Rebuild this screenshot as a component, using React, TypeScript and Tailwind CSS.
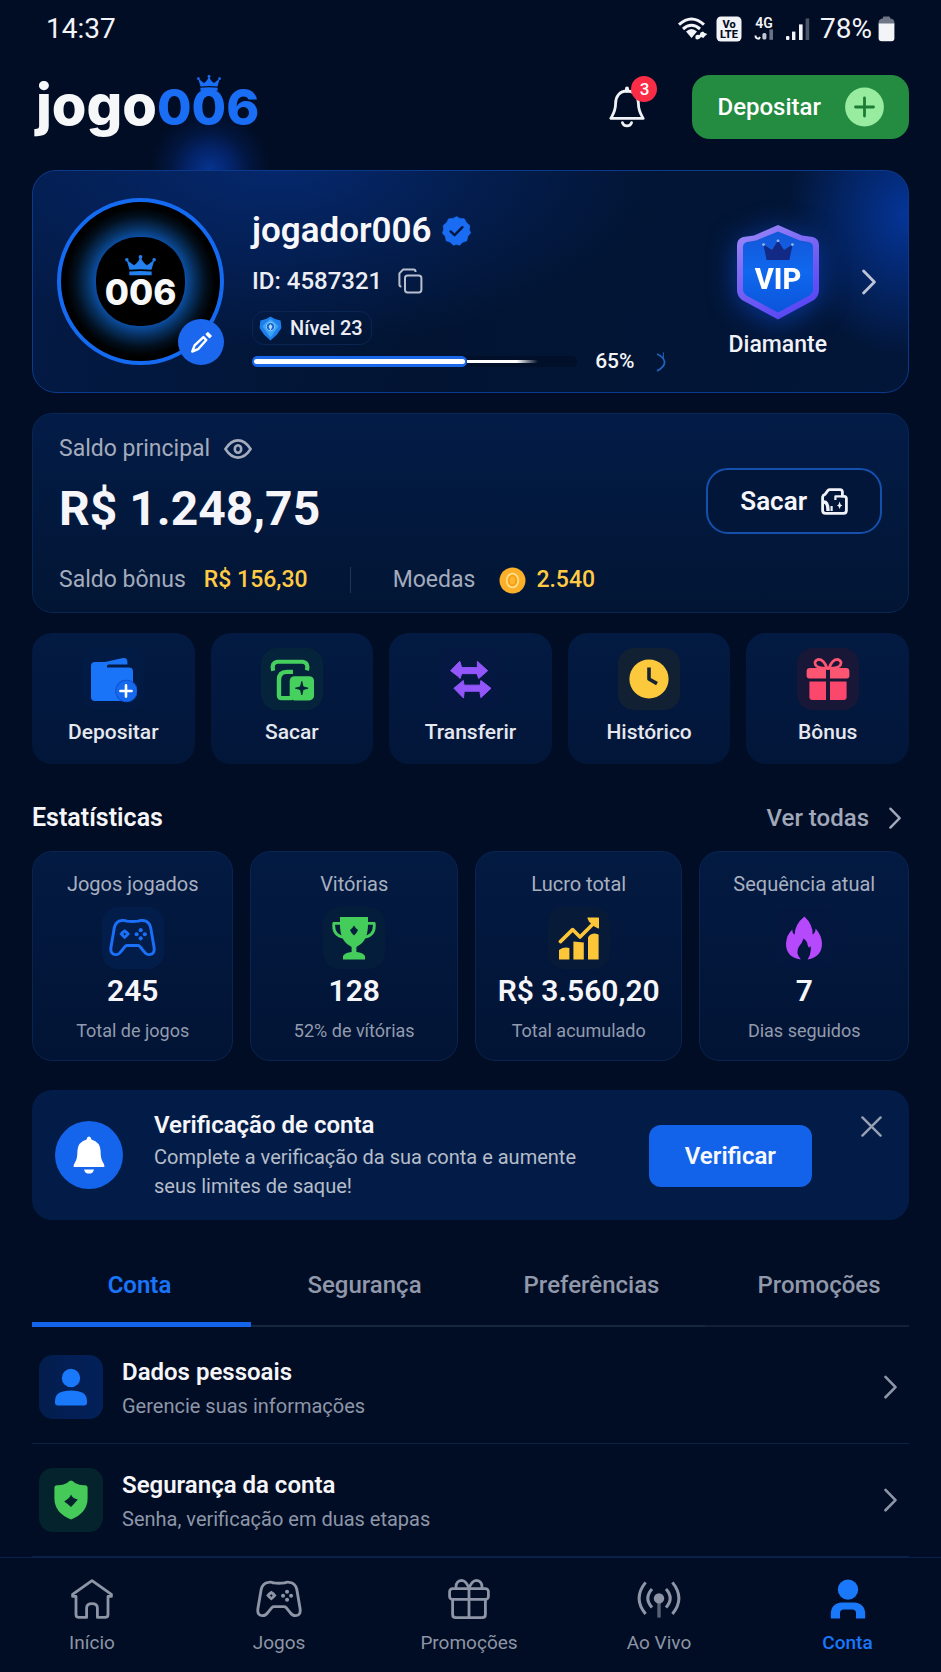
import React from "react";

const Crown = ({ className }: { className?: string }) => (
  <svg viewBox="0 0 30 20" className={className} fill="currentColor" aria-hidden="true">
    <circle cx="1.8" cy="4.6" r="1.7" />
    <circle cx="28.2" cy="4.6" r="1.7" />
    <circle cx="15" cy="1.9" r="1.8" />
    <path d="M1.5 4.5 L8.6 10 Q12.6 8 15 1.5 Q17.4 8 21.4 10 L28.5 4.5 L25.6 14.4 Q15 13 4.4 14.4 Z" />
    <path d="M4.2 16 Q15 14.8 25.8 16 V19.6 H4.2 Z" />
  </svg>
);

const Chevron = ({ className }: { className?: string }) => (
  <svg viewBox="0 0 14 26" className={className} fill="none" stroke="currentColor" strokeWidth="2.8" strokeLinecap="round" strokeLinejoin="round" aria-hidden="true">
    <path d="M1.6 2 L12.4 13 L1.6 24" />
  </svg>
);

const Gamepad = ({ className }: { className?: string }) => (
  <svg viewBox="0 0 48 40" className={className} fill="none" stroke="currentColor" strokeWidth="3" strokeLinejoin="round" aria-hidden="true">
    <path d="M13 2.6 Q16 2 18 3.2 Q24 3.9 30 3.2 Q32 2 35 2.6 Q41 3.2 42.6 10 L46 30 Q47 37 41.5 37.4 Q38 37.6 35.5 34 L31.5 29 Q30.6 28 29 28 H19 Q17.4 28 16.5 29 L12.5 34 Q10 37.6 6.5 37.4 Q1 37 2 30 L5.4 10 Q7 3.2 13 2.6 Z" />
    <g fill="currentColor" stroke="none">
      <path d="M16 11.4 L19 13.6 L21.4 16.4 L19 19 L16 21.6 L13 19 L10.6 16.4 L13 13.6 Z M16 15 L14.6 16.4 L16 17.8 L17.4 16.4 Z" fillRule="evenodd" />
      <circle cx="32.4" cy="12.4" r="2.1" />
      <circle cx="28.2" cy="16.6" r="2.1" />
      <circle cx="36.6" cy="16.6" r="2.1" />
      <circle cx="32.4" cy="20.8" r="2.1" />
    </g>
  </svg>
);

const StatusBar = () => (
  <div className="flex h-14 items-center justify-between px-[46px] pt-[2px] text-[28px] leading-8 text-[#f3f4f8]">
    <span>14:37</span>
    <div className="flex items-center">
      <svg width="30" height="24" viewBox="0 0 30 24" aria-hidden="true">
        <g fill="none" stroke="#f3f4f8" strokeWidth="3">
          <path d="M1 7.6 Q13.5 -3.6 26 7.6" />
          <path d="M5 12 Q13.5 4.6 22 12" />
        </g>
        <path d="M8 14.6 Q13.5 9.6 19 14.6 L13.5 21 Z" fill="#f3f4f8" />
        <path d="M17.4 19 Q19 17 21.6 18 L22.6 15.6 L25 14.4 L26.6 16 L29.4 17 L27 19 L25.4 21 L23 20 Q21 23.4 17.6 22 Z" fill="#f3f4f8" />
      </svg>
      <svg className="ml-2" width="26" height="26" viewBox="0 0 26 26" aria-label="VoLTE">
        <rect x="0.5" y="0.5" width="25" height="25" rx="4.5" fill="#f3f4f8" />
        <text x="13" y="12.4" textAnchor="middle" fontSize="11" fontWeight="800" fontFamily="Roboto, sans-serif" fill="#010d24">Vo</text>
        <text x="13" y="22.4" textAnchor="middle" fontSize="11" fontWeight="800" fontFamily="Roboto, sans-serif" fill="#010d24">LTE</text>
      </svg>
      <svg className="ml-[10px]" width="24" height="32" viewBox="0 0 24 32" aria-label="4G">
        <text x="12" y="14.6" textAnchor="middle" fontSize="14" fontWeight="600" fontFamily="Roboto, sans-serif" fill="#f3f4f8">4G</text>
        <path d="M3.5 22.6 Q3.5 26 7 25.6 L8 24" fill="none" stroke="#f3f4f8" strokeWidth="2" />
        <rect x="10.4" y="20" width="4" height="6.6" rx="1.6" fill="#c3c8d4" />
        <rect x="17.4" y="16.4" width="3.6" height="10.4" fill="#6a7286" />
      </svg>
      <svg className="ml-[10px]" width="24" height="24" viewBox="0 0 24 24" aria-hidden="true">
        <rect x="0" y="19" width="3.4" height="4" rx="1" fill="#f3f4f8" />
        <rect x="6" y="14.6" width="3.4" height="8.4" fill="#f3f4f8" />
        <rect x="13" y="7.4" width="3.6" height="15.6" fill="#f3f4f8" />
        <rect x="19.6" y="1.4" width="3.6" height="21.6" fill="#4b5468" />
      </svg>
      <span className="ml-[10px]">78%</span>
      <svg className="ml-[6px]" width="17" height="26" viewBox="0 0 17 26" aria-hidden="true">
        <path d="M5.4 0.6 h6 l1 2 q4 0.4 4 4 v2 H0.6 v-2 q0 -3.6 4 -4 Z" fill="#6f7688" />
        <path d="M0.6 7.6 h15.8 v14.6 q0 3 -3 3 H3.6 q-3 0 -3 -3 Z" fill="#f3f4f8" />
      </svg>
    </div>
  </div>
);

const Header = () => (
  <header className="relative mt-[19px] flex h-16 items-center justify-between">
    <div className="pointer-events-none absolute left-[118px] top-9 h-[59px] w-[120px] bg-[radial-gradient(ellipse_50%_100%_at_50%_100%,#06348f_0%,#04246b_35%,#021640_65%,transparent_100%)]"></div>
    <a href="#" className="relative ml-1 flex items-baseline pb-1 font-[Inter,sans-serif] font-extrabold leading-none" aria-label="jogo006">
      <span className="text-[56px] text-[#f6f7f9]">jogo</span>
      <span className="flex text-[50px] text-[#1a6df5]">
        <span>0</span>
        <span className="relative">
          0
          <Crown className="absolute left-1/2 top-[-7px] w-6 -translate-x-1/2" />
        </span>
        <span>6</span>
      </span>
    </a>

    <div className="flex items-center">
      <button className="relative" aria-label="Notificações, 3 novas">
        <svg width="36" height="42" viewBox="0 0 36 42" fill="none" stroke="#f1f2f7" strokeWidth="2.8" strokeLinejoin="round" strokeLinecap="round" aria-hidden="true">
          <path d="M18 2.4 V4.6" strokeWidth="4" />
          <path d="M18 5 C10.6 5 6.6 10.4 6.6 17.4 C6.6 24.6 4.6 27.4 1.8 32.4 H34.2 C31.4 27.4 29.4 24.6 29.4 17.4 C29.4 10.4 25.4 5 18 5 Z" />
          <path d="M13.4 36.6 Q14.4 39.8 18 39.8 Q21.6 39.8 22.6 36.6" />
        </svg>
        <span className="absolute -right-3 -top-[10px] flex size-[26px] items-center justify-center rounded-full bg-[#fb2c46] text-[17px] font-medium leading-none text-white">3</span>
      </button>

      <button className="ml-[47px] flex h-16 items-center gap-6 rounded-[18px] bg-[#248c41] pl-[25px] pr-[25px] text-2xl font-medium text-white">
        Depositar
        <svg width="39" height="40" viewBox="0 0 39 40" aria-hidden="true">
          <circle cx="19.5" cy="20" r="19.4" fill="#98eca0" />
          <path d="M19.5 11 V29 M10.5 20 H28.5" stroke="#1b7c36" strokeWidth="2.8" strokeLinecap="round" />
        </svg>
      </button>
    </div>
  </header>
);

const Profile = () => (
  <section className="mt-[31px] flex h-[223px] items-center rounded-3xl border border-[#0b3a8c] bg-[radial-gradient(ellipse_120px_140px_at_100%_20%,#053598_0%,transparent_100%),radial-gradient(ellipse_380px_190px_at_28%_-5%,#05286e_0%,transparent_100%),linear-gradient(100deg,#031a45_0%,#021432_45%,#021639_100%)] pl-6 pr-8">
    <div className="relative size-[167px] shrink-0 rounded-full border-4 border-[#156af2] bg-black bg-[radial-gradient(circle_closest-side,#0c4fa4_0%,#0c4fa4_56%,#07305f_68%,#02101f_82%,#000_94%)]">
      <div className="flex size-full flex-col items-center justify-center">
        <div className="flex size-[89px] flex-col items-center justify-center rounded-[42px] bg-black">
          <Crown className="w-[31px] text-[#2480ee]" />
          <span className="font-[Inter,sans-serif] text-[35px] font-extrabold leading-8 text-[#f8f8f8]">006</span>
        </div>
      </div>
      <button className="absolute -bottom-1 -right-1 flex size-[46px] items-center justify-center rounded-full bg-[#1b68ee]" aria-label="Editar foto">
        <svg width="23" height="23" viewBox="0 0 24 24" fill="none" stroke="#fff" strokeWidth="2.6" strokeLinejoin="round" aria-hidden="true">
          <path d="M2.4 21.4 L4.8 15 L14 6.4 L17 9.4 L8.4 19 Z" />
          <path d="M17 3.4 L18.6 2 L22 5.2 L20.4 6.8 Z" fill="#fff" strokeWidth="1.6" />
        </svg>
      </button>
    </div>

    <div className="ml-7 flex-1 pt-5">
      <div className="flex items-center gap-[10px]">
        <h1 className="text-[35px] font-semibold leading-10 text-[#f8f8fb]">jogador006</h1>
        <svg width="29" height="30" viewBox="0 0 29 30" aria-label="Verificado">
          <path d="M14.5 0.6 L18 2.4 L22.4 2.8 L24.4 6.6 L27.8 9.6 L27.4 13.4 L28.6 17 L25.8 20.4 L24.8 24.8 L20.8 26.2 L17.6 29.2 L14.5 28.4 L11.4 29.2 L8.2 26.2 L4.2 24.8 L3.2 20.4 L0.4 17 L1.6 13.4 L1.2 9.6 L4.6 6.6 L6.6 2.8 L11 2.4 Z" fill="#1a6df3" stroke="#1a6df3" strokeWidth="0.6" strokeLinejoin="round" />
          <path d="M8.6 15.4 L12.6 19.2 L20.4 11.2" fill="none" stroke="#031540" strokeWidth="2.4" strokeLinecap="round" strokeLinejoin="round" />
        </svg>
      </div>

      <div className="mt-4 flex items-center gap-4 text-2xl font-medium leading-7 text-[#eceef4]">
        ID: 4587321
        <button aria-label="Copiar ID">
          <svg className="block" width="25" height="26" viewBox="0 0 25 26" fill="none" stroke="#b9bfce" strokeWidth="2" strokeLinejoin="round" aria-hidden="true">
            <rect x="7" y="7.4" width="16.4" height="17" rx="2.6" />
            <path d="M3.4 18.4 H3 Q1.4 18.4 1.4 16.4 V5.4 L5 1.6 H15.4 Q17.6 1.6 17.6 4" />
          </svg>
        </button>
      </div>

      <div className="mt-4 inline-flex h-[34px] items-center gap-2 rounded-xl border border-[#0a2552] pl-[6px] pr-2 text-xl font-medium text-[#eceef4]">
        <svg width="23" height="25" viewBox="0 0 23 25" aria-hidden="true">
          <path d="M11.5 0.6 L16 3 L21.6 4.4 L22.4 12 L18 18.4 L11.5 24.4 L5 18.4 L0.6 12 L1.4 4.4 L7 3 Z" fill="#1d7fec" />
          <path d="M11.5 3 L17 7.6 L19.4 10.4 L11.5 21.6 L3.6 10.4 L6 7.6 Z" fill="#3ba4f8" />
          <circle cx="11.5" cy="10.6" r="4.2" fill="#1565cf" stroke="#8ecbff" strokeWidth="1" />
          <path d="M11.5 8 L13.4 10.6 L11.5 14.4 L9.6 10.6 Z" fill="#b6dcff" />
        </svg>
        Nível 23
      </div>

      <div className="mt-1 flex h-5 items-center text-[21px] font-medium text-[#f3f4f8]">
        <div className="flex h-[11px] flex-1 items-center rounded-full bg-[#010f28]" role="progressbar" aria-valuenow={65} aria-valuemin={0} aria-valuemax={100} aria-label="Progresso do nível">
          <div className="flex h-full items-center rounded-full bg-[#1a67ea] px-[2px]" style={{ width: "66%" }}>
            <div className="h-[5px] w-full rounded-full bg-white"></div>
          </div>
          <div className="h-[3px] w-[22%] bg-linear-to-r from-white from-70% to-transparent"></div>
        </div>
        <span className="ml-[18px]">65%</span>
        <svg className="ml-5" width="12" height="20" viewBox="0 0 12 20" fill="none" stroke="#1f63bd" strokeWidth="1.8" aria-hidden="true">
          <path d="M2 2 Q9 5 9.6 10 Q9.6 15 2 19" />
          <path d="M8.4 0.4 V6" strokeWidth="1" />
        </svg>
      </div>
    </div>

    <button className="ml-[62px] flex items-center gap-[35px] text-[23px] font-medium text-[#f3f4f8]">
      <span className="flex flex-col items-center pt-5">
        <svg width="84" height="96" viewBox="0 0 84 96" className="drop-shadow-[0_4px_14px_#08389c]" aria-hidden="true">
          <defs>
            <linearGradient id="vipEdge" x1="0" y1="0" x2="0.5" y2="1">
              <stop offset="0" stopColor="#a08cf8" />
              <stop offset="0.5" stopColor="#7a66f4" />
              <stop offset="1" stopColor="#5a48f4" />
            </linearGradient>
            <linearGradient id="vipFill" x1="0" y1="0" x2="0" y2="1">
              <stop offset="0" stopColor="#1456d8" />
              <stop offset="0.5" stopColor="#0f68ee" />
              <stop offset="1" stopColor="#0b54da" />
            </linearGradient>
          </defs>
          <path d="M42 1 L66 11.4 L77 13 Q83 15 83 21 V66 Q83 72 78 76 L42 95.4 L6 76 Q1 72 1 66 V21 Q1 15 7 13 L18 11.4 Z" fill="url(#vipEdge)" />
          <path d="M42 7.4 L64 16.4 L73 18 Q77 19 77 23 V65 Q77 69 73.6 71.4 L42 88.6 L10.4 71.4 Q7 69 7 65 V23 Q7 19 11 18 L20 16.4 Z" fill="url(#vipFill)" />
          <path d="M27.4 20.6 L36 26 L42 16.4 L48 26 L56.6 20.6 L53.4 36 H30.6 Z" fill="#122a86" />
          <circle cx="27.6" cy="20.6" r="1.4" fill="#9fb4e8" />
          <circle cx="42" cy="16.8" r="1.4" fill="#9fb4e8" />
          <circle cx="56.4" cy="20.6" r="1.4" fill="#9fb4e8" />
          <text x="42" y="65" textAnchor="middle" fontSize="29" fontWeight="800" fontFamily="Roboto, sans-serif" fill="#fff">VIP</text>
        </svg>
        <span className="mt-[11px] leading-7">Diamante</span>
      </span>
      <Chevron className="w-[14px] text-[#bcc4d6]" />
    </button>
  </section>
);

const Balance = () => (
  <section className="mt-5 rounded-[20px] border border-[#082653] bg-linear-to-b from-[#031c47] to-[#021534] px-[26px] pb-[18px] pt-[21px]">
    <div className="flex items-end justify-between">
      <div>
        <div className="flex items-center gap-[14px] text-[23px] leading-7 text-[#a3abbd]">
          Saldo principal
          <button aria-label="Ocultar saldo">
            <svg className="block" width="28" height="20" viewBox="0 0 28 20" fill="none" stroke="#a3abbd" strokeWidth="2.6" aria-hidden="true">
              <path d="M1.4 10 Q7 1.4 14 1.4 Q21 1.4 26.6 10 Q21 18.6 14 18.6 Q7 18.6 1.4 10 Z" strokeLinejoin="round" />
              <ellipse cx="14" cy="10" rx="3.2" ry="3.8" />
            </svg>
          </button>
        </div>
        <div className="mt-[18px] text-5xl font-bold leading-[56px] text-[#f6f6fa]">R$ 1.248,75</div>
      </div>

      <button className="mb-[3px] flex h-[66px] items-center gap-[14px] rounded-[22px] border-2 border-[#1450ac] bg-[#02163a] px-8 text-[26px] font-semibold text-[#f6f6fa]">
        Sacar
        <svg width="27" height="27" viewBox="0 0 27 27" fill="none" stroke="#f1f2f7" strokeWidth="2.8" strokeLinejoin="round" aria-hidden="true">
          <path d="M1.6 9 Q2 7 4 6.4 L7 2.4 Q7.6 1.6 9 1.6 H19 Q21.4 1.6 21.4 4 V8.4 H23 Q25.4 8.4 25.4 10.8 V22.6 Q25.4 25.4 22.6 25.4 H4.6 Q1.6 25.4 1.6 22.6 Z" />
          <path d="M21 8.4 H14.4 V12" strokeWidth="2.2" />
          <path d="M3 14 Q7 14 7 23" strokeWidth="3.4" />
          <path d="M10.6 18 V23" strokeWidth="2.2" />
          <path d="M18.6 13.6 L19.6 16.4 L21.4 17.4 L19.6 18.4 L18.6 21 L17.6 18.4 L16 17.4 L17.6 16.4 Z" fill="#f1f2f7" stroke="none" />
        </svg>
      </button>
    </div>

    <div className="mt-[29px] flex items-center text-[23px] leading-7 text-[#a3abbd]">
      <span>Saldo bônus</span>
      <span className="ml-[18px] font-medium text-[#ffcb45]">R$ 156,30</span>
      <span className="ml-[42px] h-[26px] w-px bg-[#21345a]"></span>
      <span className="ml-[42px]">Moedas</span>
      <svg className="ml-6" width="27" height="27" viewBox="0 0 27 27" aria-hidden="true">
        <circle cx="13.5" cy="13.5" r="13" fill="#fcb02a" />
        <ellipse cx="13.5" cy="13.5" rx="5.8" ry="6.8" fill="#f9a01b" stroke="#ffe08a" strokeWidth="1.8" />
        <ellipse cx="13.5" cy="13.5" rx="2.6" ry="4" fill="#fdb62c" />
      </svg>
      <span className="ml-[10px] font-medium text-[#ffcb45]">2.540</span>
    </div>
  </section>
);

const quickActions = [
  {
    label: "Depositar",
    tile: "bg-[#031d4a]/40",
    icon: (
      <svg width="48" height="48" viewBox="0 0 48 48" aria-hidden="true">
        <path d="M6 7 H16 L34 3 Q38.4 2.4 38.4 7 V9.4 L20 9.6 Q17.6 9.8 18 12.4 L40 12.6 Q44 12.8 44 16.6 V42 Q44 46 40 46 H6 Q2 46 2 42 V11 Q2 7 6 7 Z" fill="#1a74f8" />
        <circle cx="37.4" cy="36" r="11.2" fill="#0d52cc" />
        <circle cx="37.4" cy="36" r="10.4" fill="#1668ee" />
        <path d="M37 30.4 V41.6 M31.4 36 H42.6" stroke="#fff" strokeWidth="2.6" strokeLinecap="round" />
      </svg>
    ),
  },
  {
    label: "Sacar",
    tile: "bg-[#05233a]",
    icon: (
      <svg width="46" height="46" viewBox="0 0 48 48" aria-hidden="true">
        <g fill="none" stroke="#46d05d">
          <path d="M4.4 15.4 Q2 7 9 6 H35 Q41.6 7 39.6 15" strokeWidth="4.4" strokeLinejoin="round" />
          <path d="M24 44 H13 Q10.4 44 10.4 41 V25 Q10.4 16.6 18.6 16.6 H25" strokeWidth="4.6" strokeLinejoin="round" />
        </g>
        <rect x="21.6" y="21" width="25.4" height="25.4" rx="5" fill="#46d05d" />
        <path d="M34.2 26.6 L35.6 32.2 L40.8 33.6 L35.6 35 L34.2 40.6 L32.8 35 L27.6 33.6 L32.8 32.2 Z" fill="#06253a" stroke="#06253a" strokeWidth="1" />
      </svg>
    ),
  },
  {
    label: "Transferir",
    tile: "bg-[#071742]/60",
    icon: (
      <svg width="43" height="43" viewBox="0 0 44 44" fill="#9256fb" stroke="#9256fb" strokeWidth="1" strokeLinejoin="round" aria-hidden="true">
        <path d="M1.6 13 L11 3.4 L13 9.8 H29 L29 3.4 L39.6 13 L30.4 21 L28.6 16 H13 L11.4 21 L9 18.6 Z" />
        <path d="M5 31 L14.6 23 L15.4 27.8 H32 L32.6 23 L43 31 L32.6 40.6 L31.6 34 H15.6 L14.8 41 Z" />
      </svg>
    ),
  },
  {
    label: "Histórico",
    tile: "bg-[#122033]",
    icon: (
      <svg width="42" height="42" viewBox="0 0 42 42" aria-hidden="true">
        <circle cx="21" cy="21" r="19.6" fill="#fcc93d" />
        <path d="M21 9.6 V21 L29 25.6" fill="none" stroke="#152233" strokeWidth="3.6" strokeLinejoin="round" />
      </svg>
    ),
  },
  {
    label: "Bônus",
    tile: "bg-[#181737]",
    icon: (
      <svg width="44" height="44" viewBox="0 0 44 44" aria-hidden="true">
        <g fill="none" stroke="#fc5572" strokeWidth="2.8">
          <path d="M21 11.4 Q18 2.4 12.4 2.4 Q7.4 4 9.6 8 Q11 11 21 11.4 Z" />
          <path d="M23 11.4 Q26 2.4 31.6 2.4 Q36.6 4 34.4 8 Q33 11 23 11.4 Z" />
        </g>
        <path d="M4 11 H20 V21.4 H3 Q0.6 21.4 0.6 19 V14.4 Q0.6 11 4 11 Z M24 11 H40 Q43.4 11 43.4 14.4 V19 Q43.4 21.4 41 21.4 H24 Z" fill="#fc5572" />
        <path d="M3.4 24.4 H20 V43 H6.4 Q3.4 43 3.4 40 Z M24 24.4 H40.6 V40 Q40.6 43 37.6 43 H24 Z" fill="#fb476b" />
      </svg>
    ),
  },
];

const QuickActions = () => (
  <section className="mt-5 grid grid-cols-5 gap-4">
    {quickActions.map((action) => (
      <button key={action.label} className="flex flex-col items-center rounded-[20px] bg-linear-to-b from-[#031a42] to-[#021639] pb-[18px] pt-[15px] text-[21px] font-medium leading-7 text-[#e6e8ef]">
        <span className={`flex size-[62px] items-center justify-center rounded-2xl ${action.tile}`}>{action.icon}</span>
        <span className="mt-2">{action.label}</span>
      </button>
    ))}
  </section>
);

const stats = [
  {
    label: "Jogos jogados",
    value: "245",
    note: "Total de jogos",
    tile: "bg-[#031d4a]",
    icon: <Gamepad className="w-[47px] text-[#1a70f8]" />,
  },
  {
    label: "Vitórias",
    value: "128",
    note: "52% de vítórias",
    tile: "bg-[#031d3b]",
    icon: (
      <svg width="44" height="44" viewBox="0 0 44 44" aria-hidden="true">
        <path d="M8 1 H36 V6 Q36.6 24 26.6 29.6 L24.4 31 V36 Q31 36.6 33 40 V43.4 H11 V40 Q13 36.6 19.6 36 V31 L17.4 29.6 Q7.4 24 8 6 Z" fill="#45cd5b" />
        <path d="M9 7.4 H1.8 Q0.6 20 12.6 21.4 M35 7.4 H42.2 Q43.4 20 31.4 21.4" fill="none" stroke="#45cd5b" strokeWidth="2.8" strokeLinejoin="round" />
        <path d="M22 9.4 Q23 11.4 26 14 Q25 17 22 19.4 Q19 17 18 14 Q21 11.4 22 9.4 Z" fill="#04223b" />
      </svg>
    ),
  },
  {
    label: "Lucro total",
    value: "R$ 3.560,20",
    note: "Total acumulado",
    tile: "bg-[#071a38]",
    icon: (
      <svg width="42" height="44" viewBox="0 0 42 44" aria-hidden="true">
        <path d="M2.4 25.6 L14.6 13.6 L22 21 L35 8" fill="none" stroke="#fcc638" strokeWidth="3.6" strokeLinecap="round" strokeLinejoin="round" />
        <path d="M30 2 H40.4 V12 L36.6 10 L31.6 5.4 Z" fill="#fcc638" stroke="#fcc638" strokeWidth="1.2" strokeLinejoin="round" />
        <path d="M1 34 Q6 30.4 11.4 32 V43.4 H1 Z M15.4 25.4 L25.8 26.4 V43.4 H15.4 Z M30 21.4 Q32 17.4 37 17.4 L40.6 18.4 V43.4 H30 Z" fill="#fcc638" />
      </svg>
    ),
  },
  {
    label: "Sequência atual",
    value: "7",
    note: "Dias seguidos",
    tile: "bg-[#05173f]/60",
    icon: (
      <svg width="38" height="44" viewBox="0 0 38 44" aria-hidden="true">
        <path d="M19.4 0.6 Q28 8.6 27.6 18.6 Q30.6 16.6 30.6 12.6 Q36.8 19.6 37 27.6 Q37 41 22.6 43.6 Q25.6 39 25.8 34 Q26 28.6 24.6 31 Q24 33 22.6 29 Q22.4 25.6 18.6 22.6 Q17 27.4 14 30.4 Q10 36 15.8 43.6 Q1 41.6 1 27.6 Q1.4 18.6 7.4 13.4 Q7 17 9.8 18.6 Q9.6 8.6 19.4 0.6 Z" fill="#b649fb" />
      </svg>
    ),
  },
];

const Stats = () => (
  <section>
    <div className="mt-[38px] flex items-center justify-between leading-8">
      <h2 className="text-[25px] font-semibold text-[#f6f6fa]">Estatísticas</h2>
      <a href="#" className="flex items-center gap-5 pr-2 text-2xl font-medium text-[#a0a8ba]">
        Ver todas
        <Chevron className="w-3" />
      </a>
    </div>

    <div className="mt-[17px] grid grid-cols-[201fr_207fr_207fr_209fr] gap-[17px]">
      {stats.map((stat) => (
        <div key={stat.label} className="flex flex-col items-center rounded-[20px] border border-[#08244f] bg-linear-to-b from-[#031a42] to-[#021435] pb-[17px] pt-[18px]">
          <span className="text-xl leading-7 text-[#a8b0c0]">{stat.label}</span>
          <span className={`mt-[9px] flex size-[62px] items-center justify-center rounded-2xl ${stat.tile}`}>{stat.icon}</span>
          <span className="mt-1 text-[30px] font-semibold leading-9 text-[#f6f6fa]">{stat.value}</span>
          <span className="mt-[10px] text-lg leading-6 text-[#929bad]">{stat.note}</span>
        </div>
      ))}
    </div>
  </section>
);

const VerifyBanner = () => (
  <section className="mt-[29px] flex h-[130px] items-center rounded-[20px] bg-[#031c47] pl-[23px] pr-[27px]">
    <div className="flex size-[68px] shrink-0 items-center justify-center rounded-full bg-[#1565ec]">
      <svg width="34" height="38" viewBox="0 0 34 38" fill="#fff" aria-hidden="true">
        <path d="M17 0.6 Q19 0.6 19.4 3.4 Q28.4 6 28.6 15 Q28.6 23 31 26.4 Q32.6 28 32.4 31 H1.6 Q1.4 28 3 26.4 Q5.4 23 5.4 15 Q5.6 6 14.6 3.4 Q15 0.6 17 0.6 Z" />
        <path d="M12 33.4 H22 Q21 37.6 17 37.6 Q13 37.6 12 33.4 Z" />
      </svg>
    </div>
    <div className="ml-[31px] flex-1">
      <h2 className="text-2xl font-semibold leading-8 text-[#f6f6fa]">Verificação de conta</h2>
      <p className="mt-[2px] max-w-[450px] text-xl leading-[29px] text-[#b6bdca]">
        Complete a verificação da sua conta e aumente seus limites de saque!
      </p>
    </div>
    <button className="mt-[2px] h-[62px] rounded-xl bg-[#1263ea] px-9 text-2xl font-semibold text-[#f6f8fd]">Verificar</button>
    <button className="ml-[49px] mt-[26px] self-start text-[#98a1b4]" aria-label="Fechar">
      <svg className="block" width="21" height="21" viewBox="0 0 21 21" fill="none" stroke="currentColor" strokeWidth="2.4" strokeLinecap="round" aria-hidden="true">
        <path d="M1.4 1.4 L19.6 19.6 M19.6 1.4 L1.4 19.6" />
      </svg>
    </button>
  </section>
);

const Tabs = () => (
  <div role="tablist" className="mt-10 grid grid-cols-[219fr_227fr_227fr_204fr] text-2xl font-medium leading-8 text-[#9098aa]">
    <button role="tab" aria-selected="true" className="h-[67px] border-b-[5px] border-[#1565ec] pb-[12px] pr-1 font-semibold text-[#1a74f8]">Conta</button>
    <button role="tab" aria-selected="false" className="h-[67px] border-b-2 border-[#17263f] pb-[15px]">Segurança</button>
    <button role="tab" aria-selected="false" className="h-[67px] border-b-2 border-[#17263f] pb-[15px]">Preferências</button>
    <button role="tab" aria-selected="false" className="h-[67px] border-b-2 border-[#122036] pb-[15px] pl-6">Promoções</button>
  </div>
);

const accountItems = [
  {
    title: "Dados pessoais",
    text: "Gerencie suas informações",
    tile: "bg-linear-to-r from-[#031d4d] to-[#03205a]",
    icon: (
      <svg width="34" height="38" viewBox="0 0 34 38" fill="#1a78fb" aria-hidden="true">
        <circle cx="17" cy="10" r="9.2" />
        <path d="M1 33 Q1 22.6 17 22.6 Q33 22.6 33 33 V35 Q33 37.4 30.6 37.4 H3.4 Q1 37.4 1 35 Z" />
      </svg>
    ),
  },
  {
    title: "Segurança da conta",
    text: "Senha, verificação em duas etapas",
    tile: "bg-[#05232d]",
    icon: (
      <svg width="34" height="40" viewBox="0 0 34 40" aria-hidden="true">
        <path d="M17 0.6 Q19 0.8 21 3 Q26 5.6 31 5.2 Q33.6 5.2 33.6 8 V18 Q33.6 33 17 39.4 Q0.4 33 0.4 18 V8 Q0.4 5.2 3 5.2 Q8 5.6 13 3 Q15 0.8 17 0.6 Z" fill="#45ca5a" />
        <path d="M17 14.6 Q18.4 18.6 23.8 19.4 Q20 24 17 27 Q14 24 10.2 21.4 Q15.6 18.6 17 14.6 Z" fill="#05232d" />
      </svg>
    ),
  },
];

const AccountList = () => (
  <ul className="pt-1">
    {accountItems.map((item) => (
      <li key={item.title} className="border-b border-[#0c2145]">
        <a href="#" className="flex h-28 items-center pl-[7px] pr-3">
          <span className={`flex size-16 shrink-0 items-center justify-center rounded-[14px] ${item.tile}`}>{item.icon}</span>
          <span className="ml-[19px] flex flex-1 flex-col pt-[2px]">
            <span className="text-2xl font-semibold leading-8 text-[#f6f6fa]">{item.title}</span>
            <span className="mt-1 text-xl leading-7 text-[#8d96a8]">{item.text}</span>
          </span>
          <Chevron className="w-[13px] text-[#8d96a8]" />
        </a>
      </li>
    ))}
  </ul>
);

const BottomNav = () => (
  <nav className="mt-auto grid grid-cols-[184fr_190fr_190fr_190fr_187fr] border-t border-[#08204a] bg-[#010d24] pb-[17px] pt-[21px] text-[19px] leading-6 text-[#8d95a6]">
    <a href="#" className="flex flex-col items-center gap-3">
      <svg width="42" height="40" viewBox="0 0 42 40" fill="none" stroke="currentColor" strokeWidth="2.8" strokeLinejoin="round" strokeLinecap="round" aria-hidden="true">
        <path d="M1.6 17.4 V15.4 L21 1.6 L40.4 15.4 V17.4 H37 V35.4 Q37 38.4 34 38.4 H26.4 V29 Q26.4 24.6 21 24.6 Q15.6 24.6 15.6 29 V38.4 H8 Q5 38.4 5 35.4 V17.4 Z" />
      </svg>
      Início
    </a>
    <a href="#" className="flex flex-col items-center gap-3">
      <Gamepad className="h-10 w-[46px]" />
      Jogos
    </a>
    <a href="#" className="flex flex-col items-center gap-3">
      <svg width="42" height="40" viewBox="0 0 42 40" fill="none" stroke="currentColor" strokeWidth="2.8" strokeLinejoin="round" aria-hidden="true">
        <rect x="1.6" y="9.6" width="38.8" height="10.8" rx="3" />
        <path d="M4.6 20.4 V35.4 Q4.6 38.6 7.8 38.6 H34.2 Q37.4 38.6 37.4 35.4 V20.4 M21 9.6 V38.6" />
        <path d="M21 9.6 Q18.4 1.6 13.6 1.4 Q7.4 2 8 9.6 M21 9.6 Q23.6 1.6 28.4 1.4 Q34.6 2 34 9.6" />
      </svg>
      Promoções
    </a>
    <a href="#" className="flex flex-col items-center gap-3">
      <svg width="44" height="40" viewBox="0 0 44 40" fill="none" stroke="currentColor" strokeWidth="3" aria-hidden="true">
        <path d="M22 20 V38.6" strokeWidth="3.4" stroke="#596275" />
        <circle cx="22" cy="19.4" r="5.2" fill="currentColor" stroke="none" />
        <path d="M15 10 Q6.6 19.4 15 28.6 M29 10 Q37.4 19.4 29 28.6 M8.6 3.4 Q-4.4 19.4 8.6 35 M35.4 3.4 Q48.4 19.4 35.4 35" />
      </svg>
      Ao Vivo
    </a>
    <a href="#" aria-current="page" className="flex flex-col items-center gap-3 font-medium text-[#1a78fb]">
      <svg width="36" height="40" viewBox="0 0 36 40" fill="currentColor" aria-hidden="true">
        <circle cx="18" cy="10.6" r="10.2" />
        <path d="M0.8 39.4 V35 Q1 24 12 23.4 H24 Q35 24 35.2 35 V39.4 H26 V34 Q26 30.4 22 30.4 H14 Q10 30.4 10 34 V39.4 Z" />
      </svg>
      Conta
    </a>
  </nav>
);

const App = () => {
  return (
    <div className="flex min-h-screen flex-col bg-[#010d24] font-[Roboto,sans-serif]">
      <StatusBar />
      <main className="px-8">
        <Header />
        <Profile />
        <Balance />
        <QuickActions />
        <Stats />
        <VerifyBanner />
        <Tabs />
        <AccountList />
      </main>
      <BottomNav />
    </div>
  );
};

export default App;
